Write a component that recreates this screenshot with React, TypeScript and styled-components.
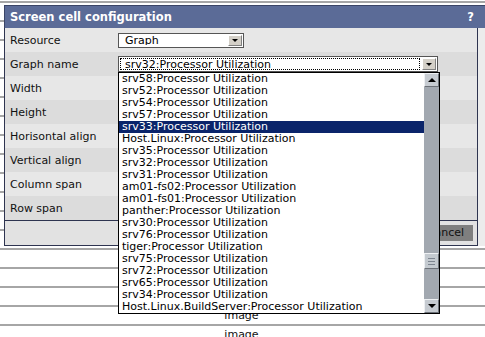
import React from 'react';
import styled, { createGlobalStyle } from 'styled-components';

const Global = createGlobalStyle`
  html, body { margin: 0; padding: 0; background: #fff; overflow: hidden; }
  body { font-family: "DejaVu Sans", Verdana, sans-serif; font-size: 11px; color: #000; }
  * { box-sizing: border-box; }
`;

const Page = styled.div`
  position: relative;
  width: 485px;
  height: 337px;
  overflow: hidden;
  padding-top: 1px;
`;

const BgTable = styled.div`
  display: flex;
  flex-direction: column;
  border-top: 2px solid #a6a6a6;
`;

const BgRow = styled.div`
  height: 19px;
  border-bottom: 2px solid #a6a6a6;
  display: flex;
  align-items: center;
  justify-content: center;
  color: #111;
  padding-right: 2px;
`;

const Dialog = styled.div`
  position: absolute;
  left: 4px;
  top: 5px;
  width: 481px;
  background: #ececec;
`;

const Header = styled.div`
  height: 23px;
  background: #5b6b97;
  border-top: 1px solid #3a4466;
  border-left: 1px solid #3a4466;
  color: #fff;
  font-weight: bold;
  font-size: 11.5px;
  display: flex;
  align-items: center;
  justify-content: space-between;
  padding: 0 11px 0 5px;
`;

const Form = styled.div`
  width: 474px;
  border-left: 1px solid #2e3450;
  border-right: 1px solid #2e3450;
  border-bottom: 1px solid #2e3450;
  display: flex;
  flex-direction: column;
`;

const Row = styled.div<{ $alt?: boolean }>`
  height: 24px;
  display: grid;
  grid-template-columns: 113px 1fr;
  align-items: center;
  background: ${(p) => (p.$alt ? '#dcdcdc' : '#e7e7e7')};
`;

const Label = styled.div`
  padding-left: 5px;
  color: #111;
`;

const Control = styled.div`
  position: relative;
  display: flex;
  align-items: center;
`;

const SelectBox = styled.div<{ $w: number; $h: number }>`
  position: relative;
  width: ${(p) => p.$w}px;
  height: ${(p) => p.$h}px;
  background: #fff;
  border: 1px solid #555;
  display: flex;
  align-items: stretch;
`;

const SelectText = styled.div<{ $focus?: boolean }>`
  flex: 1;
  display: flex;
  align-items: center;
  padding-left: 4px;
  margin: 1px;
  border: 1px ${(p) => (p.$focus ? 'dotted #000' : 'solid transparent')};
  white-space: nowrap;
  overflow: hidden;
`;

const ArrowBtn = styled.div`
  width: 14px;
  margin: 1px;
  background: #d4d0c8;
  border-top: 1px solid #fff;
  border-left: 1px solid #fff;
  border-right: 1px solid #808080;
  border-bottom: 1px solid #808080;
  display: flex;
  align-items: center;
  justify-content: center;
`;

const TriDown = styled.div<{ $s?: number }>`
  width: 0;
  height: 0;
  border-left: ${(p) => p.$s ?? 3}px solid transparent;
  border-right: ${(p) => p.$s ?? 3}px solid transparent;
  border-top: ${(p) => p.$s ?? 3}px solid #000;
`;

const TriUp = styled.div<{ $s?: number }>`
  width: 0;
  height: 0;
  border-left: ${(p) => p.$s ?? 3}px solid transparent;
  border-right: ${(p) => p.$s ?? 3}px solid transparent;
  border-bottom: ${(p) => p.$s ?? 3}px solid #000;
`;

const TextBox = styled.div`
  width: 50px;
  height: 16px;
  background: #fff;
  border: 1px solid #555;
  padding-left: 3px;
  line-height: 14px;
`;

const DropList = styled.div`
  position: absolute;
  left: -1px;
  top: calc(100% + 1px);
  width: 322px;
  height: 242px;
  border: 1px solid #000;
  background: #fff;
  display: flex;
  z-index: 10;
`;

const Items = styled.div`
  flex: 1;
  display: flex;
  flex-direction: column;
  overflow: hidden;
`;

const Item = styled.div<{ $sel?: boolean }>`
  height: 12px;
  flex: none;
  line-height: 12px;
  padding-left: 3px;
  white-space: nowrap;
  background: ${(p) => (p.$sel ? '#0a246a' : '#fff')};
  color: ${(p) => (p.$sel ? '#fff' : '#000')};
`;

const Scrollbar = styled.div`
  width: 15px;
  display: flex;
  flex-direction: column;
  background: #a2a8b0;
`;

const ScrollBtn = styled.div`
  height: 14px;
  flex: none;
  background: #c6cbd1;
  border-top: 1px solid #eef0f3;
  border-left: 1px solid #eef0f3;
  border-right: 1px solid #6c7178;
  border-bottom: 1px solid #6c7178;
  display: flex;
  align-items: center;
  justify-content: center;
`;

const Track = styled.div`
  flex: 1;
  position: relative;
`;

const Thumb = styled.div`
  position: absolute;
  left: 0;
  width: 15px;
  height: 16px;
  background: #c4cad0;
  border-top: 1px solid #eef0f3;
  border-left: 1px solid #eef0f3;
  border-right: 1px solid #6c7178;
  border-bottom: 1px solid #6c7178;
  display: flex;
  flex-direction: column;
  align-items: center;
  justify-content: center;
  gap: 2px;
`;

const Grip = styled.div`
  width: 7px;
  height: 1px;
  background: #7d8590;
`;

const Footer = styled.div`
  height: 25px;
  border-top: 1px solid #2e3450;
  background: #e2e2e2;
  display: flex;
  align-items: center;
  justify-content: flex-end;
  gap: 6px;
  padding-right: 4px;
`;

const Button = styled.div`
  height: 16px;
  padding: 0 9px 0 8px;
  background: #7f7f7f;
  color: #111;
  line-height: 16px;
`;

const graphs = [
  'srv58:Processor Utilization',
  'srv52:Processor Utilization',
  'srv54:Processor Utilization',
  'srv57:Processor Utilization',
  'srv33:Processor Utilization',
  'Host.Linux:Processor Utilization',
  'srv35:Processor Utilization',
  'srv32:Processor Utilization',
  'srv31:Processor Utilization',
  'am01-fs02:Processor Utilization',
  'am01-fs01:Processor Utilization',
  'panther:Processor Utilization',
  'srv30:Processor Utilization',
  'srv76:Processor Utilization',
  'tiger:Processor Utilization',
  'srv75:Processor Utilization',
  'srv72:Processor Utilization',
  'srv65:Processor Utilization',
  'srv34:Processor Utilization',
  'Host.Linux.BuildServer:Processor Utilization',
];

const bgRows = Array.from({ length: 18 }, (_, i) => (i >= 16 ? 'image' : ''));

const TRACK_H = 210;
const THUMB_H = 16;
const scrollRatio = 0.855;

export default function App() {
  const thumbTop = Math.round((TRACK_H - THUMB_H) * scrollRatio);
  return (
    <>
      <Global />
      <Page>
        <BgTable>
          {bgRows.map((t, i) => (
            <BgRow key={i}>{t}</BgRow>
          ))}
        </BgTable>
        <Dialog>
          <Header>
            <span>Screen cell configuration</span>
            <span>?</span>
          </Header>
          <Form>
            <Row>
              <Label>Resource</Label>
              <Control>
                <SelectBox $w={126} $h={15}>
                  <SelectText>Graph</SelectText>
                  <ArrowBtn>
                    <TriDown $s={3} />
                  </ArrowBtn>
                </SelectBox>
              </Control>
            </Row>
            <Row $alt>
              <Label>Graph name</Label>
              <Control>
                <SelectBox $w={320} $h={16}>
                  <SelectText $focus>srv32:Processor Utilization</SelectText>
                  <ArrowBtn>
                    <TriDown $s={3} />
                  </ArrowBtn>
                  <DropList>
                    <Items>
                      {graphs.map((g, i) => (
                        <Item key={i} $sel={i === 4}>
                          {g}
                        </Item>
                      ))}
                    </Items>
                    <Scrollbar>
                      <ScrollBtn>
                        <TriUp $s={4} />
                      </ScrollBtn>
                      <Track>
                        <Thumb style={{ top: thumbTop }}>
                          <Grip />
                          <Grip />
                          <Grip />
                        </Thumb>
                      </Track>
                      <ScrollBtn>
                        <TriDown $s={4} />
                      </ScrollBtn>
                    </Scrollbar>
                  </DropList>
                </SelectBox>
              </Control>
            </Row>
            <Row>
              <Label>Width</Label>
              <Control>
                <TextBox>500</TextBox>
              </Control>
            </Row>
            <Row $alt>
              <Label>Height</Label>
              <Control>
                <TextBox>100</TextBox>
              </Control>
            </Row>
            <Row>
              <Label>Horisontal align</Label>
              <Control>
                <TextBox>Center</TextBox>
              </Control>
            </Row>
            <Row $alt>
              <Label>Vertical align</Label>
              <Control>
                <TextBox>Middle</TextBox>
              </Control>
            </Row>
            <Row>
              <Label>Column span</Label>
              <Control>
                <TextBox>1</TextBox>
              </Control>
            </Row>
            <Row $alt>
              <Label>Row span</Label>
              <Control>
                <TextBox>1</TextBox>
              </Control>
            </Row>
            <Footer>
              <Button>Save</Button>
              <Button>Cancel</Button>
            </Footer>
          </Form>
        </Dialog>
      </Page>
    </>
  );
}
